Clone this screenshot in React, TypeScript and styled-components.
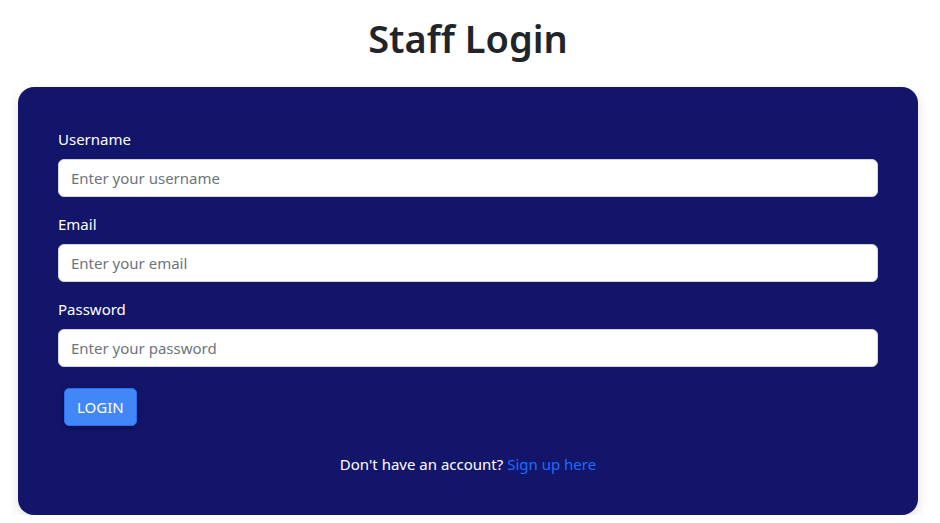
import React from "react";
import styled, { createGlobalStyle } from "styled-components";

const Global = createGlobalStyle`
  * { box-sizing: border-box; }
  body {
    margin: 0;
    background: #ffffff;
    font-family: "Noto Sans", "Open Sans", Arial, sans-serif;
    color: #212529;
  }
`;

const Page = styled.main`
  padding: 14px 22px 0 18px;
`;

const Title = styled.h1`
  margin: 0 0 25px;
  text-align: center;
  font-size: 38px;
  line-height: 48px;
  font-weight: 600;
  color: #212529;
`;

const Card = styled.form`
  background: #13156b;
  border-radius: 16px;
  padding: 40px 40px 39px;
  box-shadow: 0 4px 12px rgba(0, 0, 0, 0.12);
  display: flex;
  flex-direction: column;
`;

const Field = styled.div`
  display: flex;
  flex-direction: column;
  margin-bottom: 15px;
`;

const Label = styled.label`
  color: #ffffff;
  font-size: 15px;
  line-height: 24px;
  margin-bottom: 8px;
`;

const Input = styled.input`
  height: 38px;
  width: 100%;
  padding: 6px 12px;
  font-family: inherit;
  font-size: 15px;
  color: #212529;
  background: #ffffff;
  border: 1px solid #ced4da;
  border-radius: 6px;
  outline: none;
  &::placeholder {
    color: #6c757d;
  }
`;

const Button = styled.button`
  align-self: flex-start;
  margin: 6px 6px 26px;
  height: 38px;
  padding: 0 12px;
  font-family: inherit;
  font-size: 15px;
  color: #ffffff;
  background: #4287f7;
  border: 1px solid #2a6cf2;
  border-radius: 5px;
  box-shadow: 0 2px 6px rgba(0, 0, 0, 0.35);
  cursor: pointer;
`;

const Footer = styled.p`
  margin: 0;
  text-align: center;
  color: #ffffff;
  font-size: 15px;
  line-height: 24px;
`;

const Link = styled.a`
  color: #1a6dff;
  text-decoration: none;
`;

const fields = [
  { id: "username", label: "Username", type: "text", placeholder: "Enter your username" },
  { id: "email", label: "Email", type: "email", placeholder: "Enter your email" },
  { id: "password", label: "Password", type: "password", placeholder: "Enter your password" },
];

export default function App() {
  return (
    <>
      <Global />
      <Page>
        <Title>Staff Login</Title>
        <Card onSubmit={(e) => e.preventDefault()}>
          {fields.map((f) => (
            <Field key={f.id}>
              <Label htmlFor={f.id}>{f.label}</Label>
              <Input id={f.id} type={f.type} placeholder={f.placeholder} />
            </Field>
          ))}
          <Button type="submit">LOGIN</Button>
          <Footer>
            Don't have an account? <Link href="#">Sign up here</Link>
          </Footer>
        </Card>
      </Page>
    </>
  );
}
